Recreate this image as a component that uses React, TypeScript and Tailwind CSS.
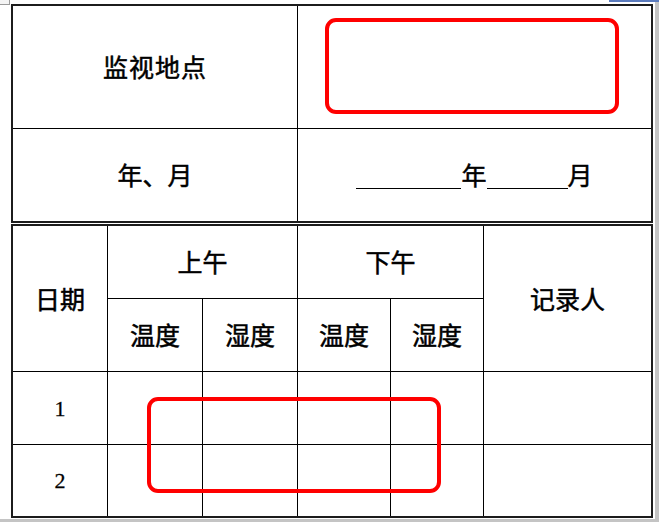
import React from 'react'

const cjk = "font-['Noto_Sans_CJK_SC','Noto_Sans_CJK_JP',sans-serif]"

const days = ['1', '2']

export default function App() {
  return (
    <div className={`relative w-[659px] h-[522px] bg-white overflow-hidden text-black ${cjk}`}>
      {/* table handle + window chrome bits */}
      <div className="absolute left-0 top-0 w-[10px] h-[5px] border border-[#9a9a9a] border-t-0 border-l-0 bg-[#f4f4f4]" />
      <div className="absolute right-0 top-0 w-[50px] h-[2px] bg-[#5b7bbd]" />
      <div className="absolute right-0 top-[2px] w-[4px] h-[520px] bg-[#c4c4c4]" />
      <div className="absolute left-0 bottom-0 w-[659px] h-[3px] bg-[#c4c4c4]" />

      <div className="pl-[11px] pt-[4px]">
        {/* top table */}
        <div className="w-[642px] border-2 border-[#1c1c1c] [-webkit-text-stroke:0.5px_black]">
          <div className="flex h-[123px] border-b border-black">
            <div className="w-[285px] border-r border-black flex items-center justify-center text-[25px] tracking-[1px]">
              监视地点
            </div>
            <div className="flex-1" />
          </div>
          <div className="flex h-[92px]">
            <div className="w-[285px] border-r border-black flex items-center justify-center text-[25px]">
              年、月
            </div>
            <div className="flex-1 flex items-center justify-center text-[25px]">
              <span className="inline-block w-[105px] h-[1px] border-b border-black self-end mb-[32px]" />
              <span>年</span>
              <span className="inline-block w-[81px] h-[1px] border-b border-black self-end mb-[32px]" />
              <span>月</span>
            </div>
          </div>
        </div>

        {/* bottom table */}
        <div className="mt-[1px] w-[642px] h-[294px] border-2 border-[#1c1c1c] grid grid-cols-[95px_95px_95px_93px_93px_167px] grid-rows-[73px_73px_73px_71px] text-[25px] [-webkit-text-stroke:0.5px_black]">
          <div className="row-span-2 border-r border-b border-black flex items-center justify-center">日期</div>
          <div className="col-span-2 border-r border-b border-black flex items-center justify-center">上午</div>
          <div className="col-span-2 border-r border-b border-black flex items-center justify-center">下午</div>
          <div className="row-span-2 border-b border-black flex items-center justify-center">记录人</div>
          <div className="border-r border-b border-black flex items-center justify-center">温度</div>
          <div className="border-r border-b border-black flex items-center justify-center">湿度</div>
          <div className="border-r border-b border-black flex items-center justify-center">温度</div>
          <div className="border-r border-b border-black flex items-center justify-center">湿度</div>
          {days.map((d, i) => (
            <React.Fragment key={d}>
              <div className={`border-r border-black flex items-center justify-center text-[22px] [-webkit-text-stroke:0.3px_black] font-['Liberation_Serif',serif] ${i === 0 ? 'border-b' : ''}`}>
                {d}
              </div>
              {[0, 1, 2, 3].map((c) => (
                <div key={c} className={`border-r border-black ${i === 0 ? 'border-b' : ''}`} />
              ))}
              <div className={`border-black ${i === 0 ? 'border-b' : ''}`} />
            </React.Fragment>
          ))}
        </div>
      </div>

      {/* red highlight boxes */}
      <div className="absolute left-[325px] top-[18px] w-[294px] h-[96px] border-4 border-[#ff0000] rounded-[11px]" />
      <div className="absolute left-[147px] top-[397px] w-[294px] h-[96px] border-4 border-[#ff0000] rounded-[11px]" />
    </div>
  )
}
